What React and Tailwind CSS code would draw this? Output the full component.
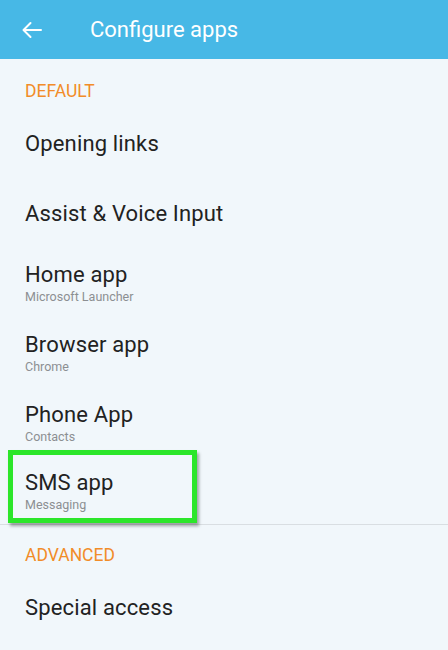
import React from "react";

const ROWS = [
  { title: "Opening links" },
  { title: "Assist & Voice Input" },
  { title: "Home app", sub: "Microsoft Launcher" },
  { title: "Browser app", sub: "Chrome" },
  { title: "Phone App", sub: "Contacts" },
];

function BackArrow() {
  return (
    <svg width="22" height="18" viewBox="0 0 22 18" fill="none" stroke="white" strokeWidth="2" strokeLinecap="round" strokeLinejoin="round">
      <path d="M20 9H3" />
      <path d="M9.5 2L2.5 9l7 7" />
    </svg>
  );
}

function Row({ title, sub, className = "h-[70px]" }) {
  return (
    <div className={`${className} flex flex-col justify-center px-[25px]`}>
      <p className="text-[22px] leading-[26px] tracking-[0.15px] text-[#222222]">{title}</p>
      {sub && <p className="text-[12.5px] leading-[18px] text-[#8c8f92]">{sub}</p>}
    </div>
  );
}

function SectionTitle({ children, className }) {
  return (
    <div className={`${className} px-[25px] text-[17.5px] leading-[20px] text-[#f28c28]`}>
      {children}
    </div>
  );
}

export default function App() {
  return (
    <div className="w-[448px] h-[650px] overflow-hidden bg-[#f1f7fb] font-['Roboto',sans-serif]">
      {/* toolbar */}
      <div className="h-[59px] bg-[#47b8e6] flex items-center">
        <div className="w-[90px] pl-[21px] flex items-center">
          <BackArrow />
        </div>
        <h1 className="text-[22px] text-white">Configure apps</h1>
      </div>

      <SectionTitle className="h-[50px] pt-[22px]">DEFAULT</SectionTitle>
      {ROWS.map((r) => (
        <Row key={r.title} {...r} />
      ))}

      {/* highlighted row */}
      <div className="relative">
        <Row title="SMS app" sub="Messaging" className="h-[65px]" />
        <div className="absolute left-[8px] top-[-9px] w-[189px] h-[73px] border-[5px] border-[#2ce62a] shadow-[2px_3px_3px_rgba(0,0,0,0.35)]" />
      </div>
      <div className="h-px bg-[#d9dee2]" />

      <SectionTitle className="h-[48px] pt-[20px]">ADVANCED</SectionTitle>
      <Row title="Special access" />
    </div>
  );
}
